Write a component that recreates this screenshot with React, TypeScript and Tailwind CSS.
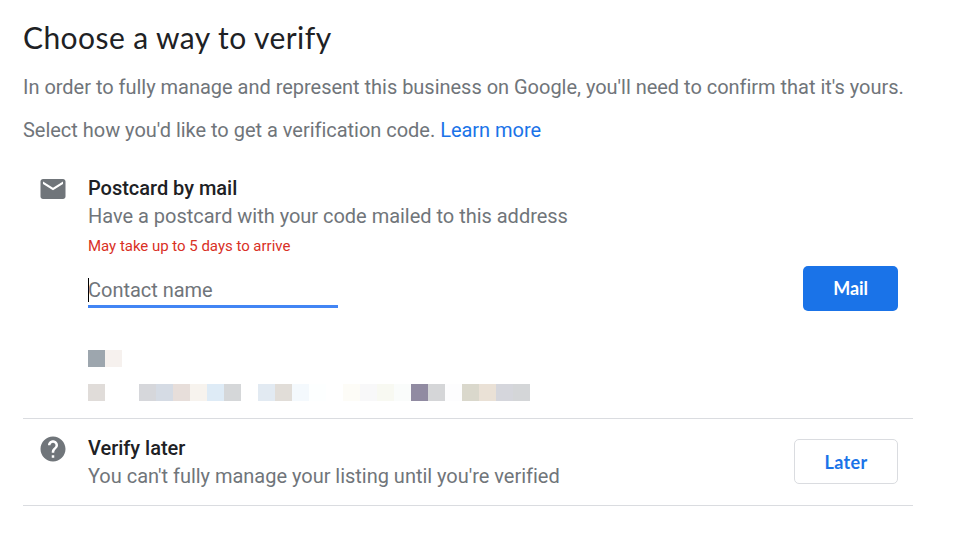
const nameBlocks = ['bg-[#9da6ae]', 'bg-[#f6f1ee]'];

const addressBlocks = [
  'bg-[#e0dcd9]', 'bg-white', 'bg-white', 'bg-[#d6d7db]', 'bg-[#d5dbe4]', 'bg-[#e7deda]',
  'bg-[#f7f3ee]', 'bg-[#deebf6]', 'bg-[#d5d7d9]', 'bg-white', 'bg-[#e2eaf2]', 'bg-[#e1ddd8]',
  'bg-[#f4f9fd]', 'bg-[#fdffff]', 'bg-white', 'bg-[#fdfcf7]', 'bg-[#f8f8f9]', 'bg-[#f8f9f2]',
  'bg-[#fafcfb]', 'bg-[#918ba2]', 'bg-[#d5d6d8]', 'bg-[#fdfdfe]', 'bg-[#dad8cc]', 'bg-[#eae1d6]',
  'bg-[#d5d6dc]', 'bg-[#d4d6d8]',
];

function Blocks({ colors }: { colors: string[] }) {
  return (
    <div className="flex h-[17px]">
      {colors.map((color, i) => (
        <span key={i} className={`h-[17px] w-[17px] ${color}`} />
      ))}
    </div>
  );
}

export default function App() {
  return (
    <main className="h-[546px] w-[958px] overflow-hidden bg-white pl-[23px] font-[Roboto,sans-serif] text-[20px] leading-7 tracking-[-0.02px] text-[#70757a]">
      <h1 className="pt-[17px] font-[Lato,sans-serif] text-[30px] leading-[40px] tracking-[0.42px] text-[#202124]">Choose a way to verify</h1>
      <p className="mt-4">In order to fully manage and represent this business on Google, you'll need to confirm that it's yours.</p>
      <p className="mt-[15px]">
        Select how you'd like to get a verification code. <a className="text-[#1a73e8]">Learn more</a>
      </p>

      <div className="w-[890px]">
        <section className="flex h-[275px] border-b border-[#dadce0] pt-[30px]">
          <svg className="ml-[15px] h-[30px] w-[30px] shrink-0 fill-[#70757a]" viewBox="0 0 24 24">
            <path d="M20 4H4c-1.1 0-2 .9-2 2v12c0 1.1.9 2 2 2h16c1.1 0 2-.9 2-2V6c0-1.1-.9-2-2-2zm0 4-8 5-8-5V6l8 5 8-5v2z" />
          </svg>
          <div className="ml-5 flex-1">
            <h2 className="font-medium text-[#202124]">Postcard by mail</h2>
            <p>Have a postcard with your code mailed to this address</p>
            <p className="mt-1 text-[15px] leading-6 text-[#d93025]">May take up to 5 days to arrive</p>
            <div className="mt-4 flex h-[34px] w-[250px] items-center border-b-3 border-[#4285f4]">
              <span className="-mr-px h-6 w-px bg-black" />
              <span>Contact name</span>
            </div>
            <div className="mt-[42px]"><Blocks colors={nameBlocks} /></div>
            <div className="mt-[17px]"><Blocks colors={addressBlocks} /></div>
          </div>
          <button className="mt-[92px] mr-[15px] h-[45px] w-[95px] rounded-[5px] bg-[#1a73e8] pb-0.5 font-[Lato,sans-serif] text-[18px] font-bold tracking-[-0.1px] text-white">Mail</button>
        </section>
        <section className="flex h-[87px] border-b border-[#dadce0] pt-[15px]">
          <svg className="ml-[15px] h-[30px] w-[30px] shrink-0 fill-[#70757a]" viewBox="0 0 24 24">
            <path d="M12 2C6.48 2 2 6.48 2 12s4.48 10 10 10 10-4.48 10-10S17.52 2 12 2zm1 17h-2v-2h2v2zm2.07-7.75-.9.92C13.45 12.9 13 13.5 13 15h-2v-.5c0-1.1.45-2.1 1.17-2.83l1.24-1.26c.37-.36.59-.86.59-1.41 0-1.1-.9-2-2-2s-2 .9-2 2H8c0-2.21 1.79-4 4-4s4 1.79 4 4c0 .88-.36 1.68-.93 2.25z" />
          </svg>
          <div className="ml-5 flex-1">
            <h2 className="font-medium text-[#202124]">Verify later</h2>
            <p>You can't fully manage your listing until you're verified</p>
          </div>
          <button className="mt-[5px] mr-[15px] h-[45px] w-[104px] rounded-[5px] border border-[#dadce0] font-[Lato,sans-serif] text-[18px] font-bold tracking-[0.35px] text-[#1a73e8]">Later</button>
        </section>
      </div>
    </main>
  );
}
